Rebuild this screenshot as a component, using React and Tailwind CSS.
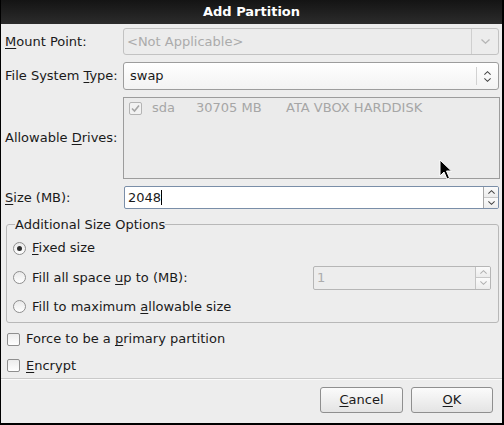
import React from 'react'

// mnemonic underline
const U = ({ children }) => <span className="underline decoration-1 underline-offset-[2px]">{children}</span>

function Radio({ checked }) {
  return (
    <span className="w-[13px] h-[13px] rounded-full border border-[#8e8e8e] bg-linear-to-b from-[#e9e9e9] to-[#ffffff] flex items-center justify-center shrink-0">
      {checked && <span className="w-[5px] h-[5px] rounded-full bg-[#2e2e2e]" />}
    </span>
  )
}

function Check({ checked, disabled }) {
  return (
    <span
      className={
        'w-[13px] h-[13px] rounded-[2px] border flex items-center justify-center shrink-0 ' +
        (disabled ? 'border-[#b4b4b4] bg-[#f2f2f2]' : 'border-[#8e8e8e] bg-linear-to-b from-[#ececec] to-[#ffffff]')
      }
    >
      {checked && (
        <svg width="9" height="9" viewBox="0 0 9 9">
          <path d="M1 4.5 L3.5 7 L8 1.5" fill="none" stroke={disabled ? '#a5a5a5' : '#333'} strokeWidth="1.6" />
        </svg>
      )}
    </span>
  )
}

function Chevron({ up, color = '#555', w = 9, h = 5 }) {
  return (
    <svg width={w} height={h} viewBox="0 0 9 5">
      <path d={up ? 'M0.5 4.5 L4.5 0.8 L8.5 4.5' : 'M0.5 0.5 L4.5 4.2 L8.5 0.5'} fill="none" stroke={color} strokeWidth="1.3" />
    </svg>
  )
}

function SpinButtons({ disabled }) {
  const c = disabled ? '#b0b0b0' : '#444'
  return (
    <div className={'w-[15px] flex flex-col border-l ' + (disabled ? 'border-[#c4c4c4]' : 'border-[#a6a6a6]')}>
      <div className="flex-1 flex items-center justify-center bg-linear-to-b from-[#fbfbfb] to-[#ececec] border-b border-[#c8c8c8]">
        <Chevron up color={c} w={7} h={4} />
      </div>
      <div className="flex-1 flex items-center justify-center bg-linear-to-b from-[#fbfbfb] to-[#ececec]">
        <Chevron color={c} w={7} h={4} />
      </div>
    </div>
  )
}

function Cursor() {
  return (
    <svg className="absolute left-[439px] top-[159px]" width="14" height="22" viewBox="0 0 14 22">
      <path d="M1 1 L1 17 L5 13 L8 20 L10.5 19 L7.5 12 L12.5 12 Z" fill="#000" stroke="#fff" strokeWidth="1" />
    </svg>
  )
}

export default function App() {
  return (
    <div className="relative w-[504px] h-[425px] bg-black flex flex-col pl-px pr-[2px] pb-[2px] font-['DejaVu_Sans',sans-serif] text-[13px] text-[#1a1a1a] overflow-hidden">
      {/* title bar */}
      <div className="h-[24px] shrink-0 bg-linear-to-b from-[#141414] to-[#2c2c2c] flex items-center justify-center text-white font-bold">
        Add Partition
      </div>

      {/* dialog body */}
      <div className="flex-1 bg-[#ededed] flex flex-col pl-[4px] pr-[3px]">
        {/* mount point */}
        <div className="mt-[4px] h-[27px] flex items-center">
          <div className="w-[118px]"><U>M</U>ount Point:</div>
          <div className="flex-1 h-full flex rounded-[3px] border border-[#c2c2c2] bg-[#ececec]">
            <div className="flex-1 flex items-center pl-[3px] text-[#ababab]">&lt;Not Applicable&gt;</div>
            <div className="w-[27px] border-l border-[#cfcfcf] flex items-center justify-center">
              <Chevron color="#b5b5b5" />
            </div>
          </div>
        </div>

        {/* file system type */}
        <div className="mt-[7px] h-[28px] flex items-center">
          <div className="w-[118px]">File System <U>T</U>ype:</div>
          <div className="flex-1 h-full flex rounded-[3px] border border-[#9d9d9d] bg-linear-to-b from-[#ffffff] to-[#f3f3f3]">
            <div className="flex-1 flex items-center pl-[6px]">swap</div>
            <div className="w-[22px] my-[4px] border-l border-[#d2d2d2] flex flex-col items-center justify-center gap-[3px]">
              <Chevron up color="#444" w={7} h={4} />
              <Chevron color="#444" w={7} h={4} />
            </div>
          </div>
        </div>

        {/* allowable drives */}
        <div className="mt-[7px] h-[82px] flex items-center">
          <div className="w-[118px]">Allowable <U>D</U>rives:</div>
          <div className="flex-1 h-full -mr-px border border-[#9c9c9c] bg-[#ebebeb]">
            <div className="h-[20px] flex items-center pl-[5px] text-[#a6a6a6]">
              <Check checked disabled />
              <span className="ml-[10px] w-[44px]">sda</span>
              <span className="w-[90px]">30705 MB</span>
              <span>ATA VBOX HARDDISK</span>
            </div>
          </div>
        </div>

        {/* size */}
        <div className="mt-[7px] h-[23px] flex items-center">
          <div className="w-[118px]"><U>S</U>ize (MB):</div>
          <div className="flex-1 h-full flex ml-px rounded-[2px] border border-[#7a8ea8] bg-white overflow-hidden">
            <div className="flex-1 flex items-center pl-[3px]">
              2048<span className="w-px h-[15px] bg-black" />
            </div>
            <SpinButtons />
          </div>
        </div>

        {/* additional size options */}
        <fieldset className="mt-[8px] ml-px border border-[#b8b8b8] rounded-[3px] pl-[6px] pr-[7px] pt-px pb-px">
          <legend className="ml-[2px] px-0 leading-[15px]">Additional Size Options</legend>
          <div className="h-[30px] flex items-center">
            <Radio checked />
            <span className="ml-[6px]"><U>F</U>ixed size</span>
          </div>
          <div className="h-[29px] flex items-center">
            <Radio />
            <span className="ml-[6px]">Fill all space <U>u</U>p to (MB):</span>
            <div className="ml-auto w-[178px] h-[24px] flex rounded-[2px] border border-[#b6b6b6] bg-[#ededed] overflow-hidden">
              <div className="flex-1 flex items-center pl-[3px] text-[#acacac]">1</div>
              <SpinButtons disabled />
            </div>
          </div>
          <div className="h-[29px] flex items-center">
            <Radio />
            <span className="ml-[6px]">Fill to maximum <U>a</U>llowable size</span>
          </div>
        </fieldset>

        {/* checkboxes */}
        <div className="mt-[3px] h-[26px] flex items-center pl-[2px]">
          <Check />
          <span className="ml-[6px]">Force to be a <U>p</U>rimary partition</span>
        </div>
        <div className="mt-px h-[25px] flex items-center pl-[2px]">
          <Check />
          <span className="ml-[6px]"><U>E</U>ncrypt</span>
        </div>

        <div className="-ml-[4px] -mr-[3px] border-t border-[#c9c9c9] border-b border-b-[#fafafa]" />

        {/* buttons */}
        <div className="mt-[7px] flex justify-end gap-[8px] mr-[6px]">
          <button className="w-[83px] h-[26px] rounded-[3px] border border-[#8f8f8f] bg-linear-to-b from-[#fbfbfb] to-[#e4e4e4] flex items-center justify-center">
            <U>C</U>ancel
          </button>
          <button className="w-[82px] h-[26px] rounded-[3px] border border-[#8f8f8f] bg-linear-to-b from-[#fbfbfb] to-[#e4e4e4] flex items-center justify-center">
            <U>O</U>K
          </button>
        </div>
      </div>

      <Cursor />
    </div>
  )
}
